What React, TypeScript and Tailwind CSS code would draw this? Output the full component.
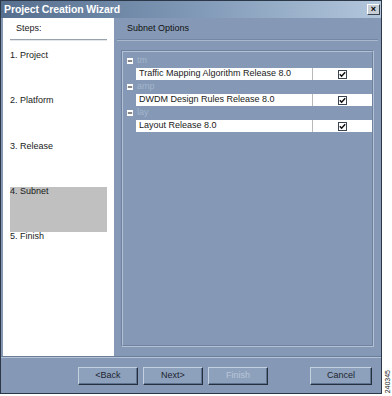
import { Minus } from "lucide-react";

const steps = ["1. Project", "2. Platform", "3. Release", "4. Subnet", "5. Finish"];

const groups = [
  { key: "tm", label: "Traffic Mapping Algorithm Release 8.0" },
  { key: "amp", label: "DWDM Design Rules Release 8.0" },
  { key: "lay", label: "Layout Release 8.0" },
];

const CheckBox = () => (
  <div className="w-[9px] h-[9px] bg-white border border-[#3b4450] flex items-center justify-center">
    <svg width="7" height="7" viewBox="0 0 7 7">
      <path d="M0.8 3.2 L2.6 5.2 L6.2 1.2" fill="none" stroke="#111" strokeWidth="1.5" />
    </svg>
  </div>
);

const WizButton = ({ label, disabled = false, width = "w-[60px]" }: { label: string; disabled?: boolean; width?: string }) => (
  <div
    className={`${width} h-[18px] flex items-center justify-center border border-t-[#c3d0e0] border-l-[#c3d0e0] border-r-[#24303e] border-b-[#24303e] bg-[#8ea1bc] shadow-[inset_-1px_-1px_0_#5f7290] ${
      disabled ? "text-[#b8c6d8]" : "text-[#1c2430]"
    }`}
  >
    {label}
  </div>
);

export default function App() {
  return (
    <div className="w-[392px] h-[396px] bg-white flex font-['Liberation_Sans',sans-serif] text-[9px] text-[#1a1a1a]">
      <div className="w-[382px] h-[394px] border border-[#2c3848] bg-[#8599b6] flex flex-col">
        {/* title bar */}
        <div className="h-[17px] flex items-center justify-between pl-[3px] pr-[1px] bg-gradient-to-r from-[#566f8e] via-[#7f98b6] to-[#b3c7dc]">
          <span className="text-white font-bold text-[10.5px] tracking-[-0.1px]">Project Creation Wizard</span>
          <div className="w-[13px] h-[11px] bg-[#c7ced6] border border-t-white border-l-white border-r-[#3a4450] border-b-[#3a4450] flex items-center justify-center text-black font-bold text-[9px] leading-none">
            ×
          </div>
        </div>

        {/* body */}
        <div className="flex flex-1 px-[2px]">
          {/* steps */}
          <div className="w-[111px] bg-white flex flex-col px-[7px]">
            <div className="h-[17px] flex items-end pl-[6px] text-[#222]">Steps:</div>
            <div className="mt-[4px] h-[2px] border-t border-[#9aa3ad] border-b border-b-[#e4e7ea]" />
            <div className="mt-[10px] flex flex-col">
              {steps.map((s, i) => (
                <div key={s} className={`h-[45.3px] ${i === 3 ? "bg-[#c0c0c0]" : ""}`}>
                  <div className="leading-[11px] -mt-[1px]">{s}</div>
                </div>
              ))}
            </div>
          </div>

          {/* content */}
          <div className="flex-1 flex flex-col pl-[3px] pr-[1px]">
            <div className="h-[17px] flex items-end pl-[10px] text-[#111]">Subnet Options</div>
            <div className="mt-[4px] h-[2px] border-t border-[#7488a5] border-b border-b-[#a7b8cd]" />
            <div className="mt-[9px] mx-[4px] h-[297px] border border-t-[#6f83a1] border-l-[#6f83a1] border-r-[#b2c1d4] border-b-[#b2c1d4]">
              <div className="h-full border border-t-[#b2c1d4] border-l-[#b2c1d4] border-r-[#6f83a1] border-b-[#6f83a1] pt-[2px]">
                {groups.map((g) => (
                  <div key={g.key} className="flex flex-col">
                    <div className="h-[14px] flex items-center pl-[4px] gap-[4px]">
                      <div className="w-[6px] h-[6px] bg-white flex items-center justify-center">
                        <Minus size={6} strokeWidth={4} color="#111" />
                      </div>
                      <span className="text-[#a3b5cb]">{g.key}</span>
                    </div>
                    <div className="ml-[13px] h-[12px] bg-white flex items-center">
                      <div className="w-[177px] pl-[3px] border-r border-[#b9b9b9] h-full flex items-center">{g.label}</div>
                      <div className="flex-1 flex justify-center">
                        <CheckBox />
                      </div>
                    </div>
                  </div>
                ))}
              </div>
            </div>
          </div>
        </div>

        {/* footer */}
        <div className="h-[36px] border-t border-[#b5c3d5] shadow-[0_-1px_0_#6a7e9b] flex items-center pl-[77px] pr-[9px] gap-[5px]">
          <WizButton label="<Back" />
          <WizButton label="Next>" />
          <WizButton label="Finish" disabled />
          <div className="flex-1" />
          <WizButton label="Cancel" width="w-[62px]" />
        </div>
      </div>
      <div className="flex-1 flex items-end justify-center pb-[3px]">
        <span className="[writing-mode:vertical-rl] rotate-180 text-[7px] text-[#222] leading-none">240345</span>
      </div>
    </div>
  );
}
